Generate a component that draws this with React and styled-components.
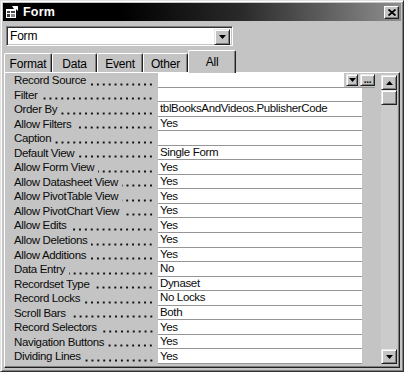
import React from "react";
import styled, { createGlobalStyle } from "styled-components";

const GlobalStyle = createGlobalStyle`
  body {
    margin: 0;
    background: #c4c4c4;
    font-family: "Liberation Sans", Arial, sans-serif;
  }
`;

const Window = styled.div`
  box-sizing: border-box;
  width: 404px;
  height: 372px;
  display: flex;
  flex-direction: column;
  padding: 2px;
  background: #c4c4c4;
  border: 1px solid;
  border-color: #e0e0e0 #303030 #303030 #e0e0e0;
  box-shadow: inset 1px 1px 0 #fff, inset -1px -1px 0 #808080;
`;

const TitleBar = styled.div`
  height: 18px;
  display: flex;
  align-items: center;
  gap: 4px;
  padding: 0 2px;
  background: linear-gradient(to right, #000 30%, #2a2a2a 60%, #8f8f8f 100%);
  color: #fff;
  font-weight: bold;
  font-size: 12.5px;
`;

const TitleText = styled.span`
  flex: 1;
  letter-spacing: 0.2px;
`;

const CloseButton = styled.div`
  box-sizing: border-box;
  width: 15px;
  height: 13px;
  display: flex;
  align-items: center;
  justify-content: center;
  background: #c4c4c4;
  border: 1px solid;
  border-color: #fff #202020 #202020 #fff;
  box-shadow: inset -1px -1px 0 #808080;
`;

const ComboRow = styled.div`
  display: flex;
  margin: 5px 0 0 3px;
`;

const Combo = styled.div`
  box-sizing: border-box;
  width: 227px;
  height: 20px;
  display: flex;
  background: #fff;
  border: 1px solid;
  border-color: #808080 #fff #fff #808080;
  box-shadow: inset 1px 1px 0 #303030, inset -1px -1px 0 #c4c4c4;
  padding: 2px;
`;

const ComboText = styled.div`
  flex: 1;
  font-size: 12px;
  line-height: 14px;
  padding-left: 1px;
  letter-spacing: -0.2px;
`;

const ArrowButton = styled.div`
  box-sizing: border-box;
  width: ${(p) => p.$w || 16}px;
  height: ${(p) => p.$h || 16}px;
  flex: none;
  display: flex;
  align-items: center;
  justify-content: center;
  background: #c4c4c4;
  border: 1px solid;
  border-color: #e8e8e8 #202020 #202020 #e8e8e8;
  box-shadow: inset 1px 1px 0 #fff, inset -1px -1px 0 #808080;
  font-size: 10px;
  font-weight: bold;
  line-height: 1;
`;

const TabRow = styled.div`
  display: flex;
  align-items: flex-end;
  height: 22px;
  margin: 4px 0 0 1px;
`;

const Tab = styled.div`
  box-sizing: border-box;
  position: relative;
  z-index: ${(p) => (p.$active ? 2 : 1)};
  width: ${(p) => p.$w}px;
  height: ${(p) => (p.$active ? 23 : 19)}px;
  margin-bottom: ${(p) => (p.$active ? -1 : 0)}px;
  padding-top: ${(p) => (p.$active ? 4 : 3)}px;
  text-align: center;
  font-size: 12px;
  letter-spacing: -0.2px;
  background: #c4c4c4;
  border-top: 1px solid #fff;
  border-left: 1px solid #fff;
  border-right: 1px solid #202020;
  border-radius: 2px 2px 0 0;
  box-shadow: inset -1px 0 0 #808080;
`;

const Panel = styled.div`
  flex: 1;
  display: flex;
  margin: 0 1px 1px 1px;
  border: 1px solid;
  border-color: #fff #202020 #202020 #fff;
  box-shadow: inset -1px -1px 0 #808080;
  padding: 0 2px 0 3px;
`;

const List = styled.div`
  flex: 1;
  display: flex;
  flex-direction: column;
`;

const Row = styled.div`
  display: flex;
  height: 14.55px;
`;

const Label = styled.div`
  width: 150px;
  display: flex;
  padding-left: 6px;
  box-sizing: border-box;
  font-size: 11.5px;
  line-height: 14px;
  letter-spacing: -0.35px;
  white-space: nowrap;
  color: #0a0a0a;
`;

/* dot leader drawn as a repeated background, aligned to the right edge */
const Dots = styled.span`
  flex: 1;
  margin: 0 4px 0 4px;
  background-image: radial-gradient(circle, #111 0.9px, transparent 1.3px);
  background-size: 5.9px 3px;
  background-repeat: repeat-x;
  background-position: right bottom 2px;
`;

const Value = styled.div`
  box-sizing: border-box;
  width: ${(p) => (p.$wide ? 217 : 204)}px;
  display: flex;
  align-items: center;
  gap: 2px;
  background: ${(p) => (p.$wide ? "transparent" : "#fff")};
  border-bottom: 1px solid #959595;
  font-size: 11.5px;
  line-height: 13px;
  letter-spacing: -0.35px;
  padding-left: 2px;
  white-space: nowrap;
  color: #0a0a0a;
`;

const Field = styled.div`
  flex: 1;
  align-self: stretch;
  background: #fff;
  margin-left: -2px;
`;

const ScrollBar = styled.div`
  width: 16px;
  display: flex;
  flex-direction: column;
  padding: 2px 0 3px;
`;

const Track = styled.div`
  flex: 1;
  background: #cbcbcb;
`;

const Triangle = ({ up }) => (
  <svg width="7" height="4" viewBox="0 0 7 4">
    <polygon points={up ? "0,4 7,4 3.5,0" : "0,0 7,0 3.5,4"} fill="#000" />
  </svg>
);

const FormIcon = () => (
  <svg width="14" height="14" viewBox="0 0 14 14">
    <rect x="1" y="4" width="10" height="9" fill="#fff" />
    <rect x="2" y="6" width="3" height="2" fill="#444" />
    <rect x="6" y="6" width="4" height="2" fill="#444" />
    <rect x="2" y="9" width="3" height="3" fill="#444" />
    <rect x="6" y="9" width="4" height="3" fill="#888" />
    <polygon points="7,1 13,1 13,6 11,4 9,4" fill="#fff" />
  </svg>
);

const rows = [
  ["Record Source", null],
  ["Filter", ""],
  ["Order By", "tblBooksAndVideos.PublisherCode"],
  ["Allow Filters", "Yes"],
  ["Caption", ""],
  ["Default View", "Single Form"],
  ["Allow Form View", "Yes"],
  ["Allow Datasheet View", "Yes"],
  ["Allow PivotTable View", "Yes"],
  ["Allow PivotChart View", "Yes"],
  ["Allow Edits", "Yes"],
  ["Allow Deletions", "Yes"],
  ["Allow Additions", "Yes"],
  ["Data Entry", "No"],
  ["Recordset Type", "Dynaset"],
  ["Record Locks", "No Locks"],
  ["Scroll Bars", "Both"],
  ["Record Selectors", "Yes"],
  ["Navigation Buttons", "Yes"],
  ["Dividing Lines", "Yes"],
];

const tabs = [
  ["Format", 48],
  ["Data", 45],
  ["Event", 46],
  ["Other", 45],
  ["All", 48],
];

export default function App() {
  return (
    <>
      <GlobalStyle />
      <Window>
        <TitleBar>
          <FormIcon />
          <TitleText>Form</TitleText>
          <CloseButton>
            <svg width="8" height="7" viewBox="0 0 8 7">
              <path d="M0.5 0.5 L7.5 6.5 M7.5 0.5 L0.5 6.5" stroke="#000" strokeWidth="1.8" />
            </svg>
          </CloseButton>
        </TitleBar>

        <ComboRow>
          <Combo>
            <ComboText>Form</ComboText>
            <ArrowButton $w={16} $h={16}>
              <Triangle />
            </ArrowButton>
          </Combo>
        </ComboRow>

        <TabRow>
          {tabs.map(([name, w]) => (
            <Tab key={name} $w={w} $active={name === "All"}>
              {name}
            </Tab>
          ))}
        </TabRow>

        <Panel>
          <List>
            {rows.map(([label, value]) => (
              <Row key={label}>
                <Label>
                  {label}
                  <Dots />
                </Label>
                {value === null ? (
                  <Value $wide>
                    <Field />
                    <ArrowButton $w={12} $h={12}>
                      <Triangle />
                    </ArrowButton>
                    <ArrowButton $w={15} $h={12}>
                      ...
                    </ArrowButton>
                  </Value>
                ) : (
                  <Value>{value}</Value>
                )}
              </Row>
            ))}
          </List>
          <ScrollBar>
            <ArrowButton $h={15}>
              <Triangle up />
            </ArrowButton>
            <ArrowButton $h={15} />
            <Track />
            <ArrowButton $h={15}>
              <Triangle />
            </ArrowButton>
          </ScrollBar>
        </Panel>
      </Window>
    </>
  );
}
